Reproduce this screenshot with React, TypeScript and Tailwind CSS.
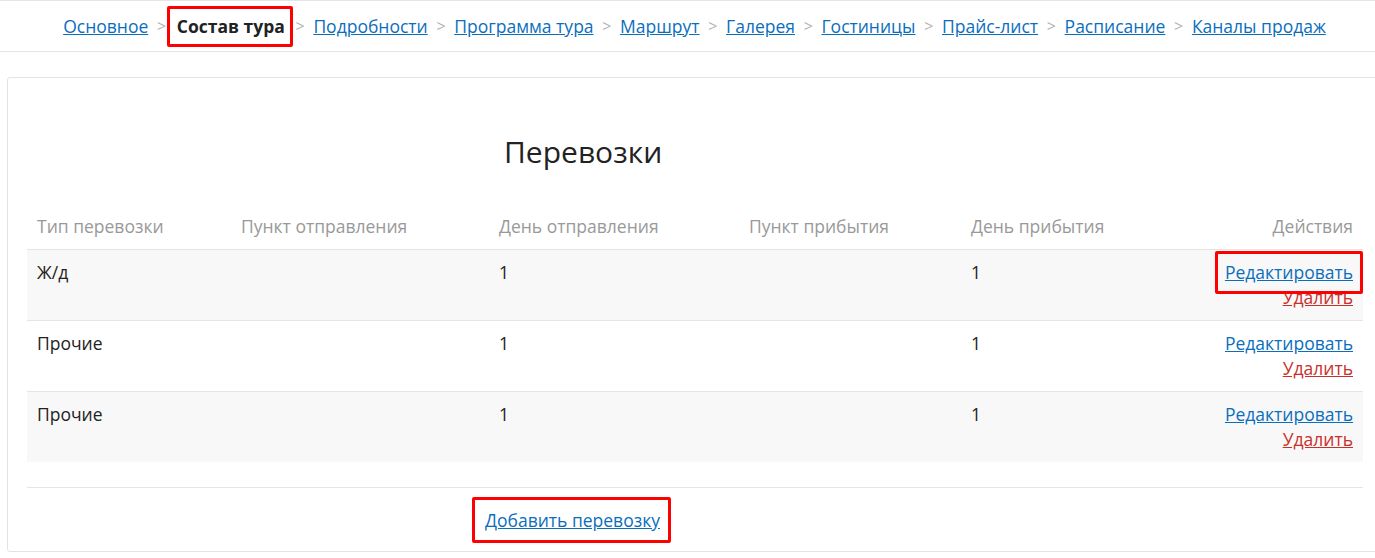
import React from "react";

const navItems = [
  "Основное",
  "Состав тура",
  "Подробности",
  "Программа тура",
  "Маршрут",
  "Галерея",
  "Гостиницы",
  "Прайс-лист",
  "Расписание",
  "Каналы продаж",
];

const rows = [
  { type: "Ж/д", dep: "1", arr: "1", highlight: true, bg: true },
  { type: "Прочие", dep: "1", arr: "1", highlight: false, bg: false },
  { type: "Прочие", dep: "1", arr: "1", highlight: false, bg: true },
];

export default function App() {
  return (
    <div
      className="w-[1375px] h-[558px] bg-white text-[#333] overflow-hidden"
      style={{ fontFamily: '"Open Sans", "Liberation Sans", sans-serif' }}
    >
      {/* Top nav */}
      <div className="h-[52px] border-t border-b border-[#e5e5e5] flex items-center justify-center text-[17.5px] leading-[26px] pl-[14px]">
        {navItems.map((item, i) => (
          <React.Fragment key={item}>
            {i > 0 && <span className="text-[#b3b3b3] mx-[8.7px] text-[16px]">&gt;</span>}
            {item === "Состав тура" ? (
              <span className="relative inline-block font-bold text-[#222] mx-[2px] leading-[26px]">
                {item}
                <span className="absolute left-[-10px] right-[-8px] top-[-7px] bottom-[-8px] border-[3px] border-[#ff0000] rounded-[2px]" />
              </span>
            ) : (
              <a href="#" className="text-[#0a6ebd] underline">
                {item}
              </a>
            )}
          </React.Fragment>
        ))}
      </div>

      {/* Card */}
      <div className="mt-[25px] ml-[7px] w-[1380px] h-[475px] border border-[#e3e3e3] rounded-[3px] pt-[54px] px-[19px]">
        <div className="pl-[477px] text-[30px] leading-[40px] text-[#222]">Перевозки</div>
        <table className="mt-[33px] w-[1336px] text-[17.5px] leading-[25px] border-collapse">
          <thead>
            <tr className="text-[#999]">
              <th className="font-normal text-left px-[10px] pt-[9px] pb-[10px] w-[204px]">Тип перевозки</th>
              <th className="font-normal text-left px-[10px] pt-[9px] pb-[10px] w-[258px]">Пункт отправления</th>
              <th className="font-normal text-left px-[10px] pt-[9px] pb-[10px] w-[250px]">День отправления</th>
              <th className="font-normal text-left px-[10px] pt-[9px] pb-[10px] w-[222px]">Пункт прибытия</th>
              <th className="font-normal text-left px-[10px] pt-[9px] pb-[10px]">День прибытия</th>
              <th className="font-normal text-right px-[10px] pt-[9px] pb-[10px]">Действия</th>
            </tr>
          </thead>
          <tbody>
            {rows.map((r, i) => (
              <tr key={i} className={`border-t border-[#e5e5e5] align-top ${r.bg ? "bg-[#f8f8f8]" : "bg-white"}`}>
                <td className="px-[10px] py-[10px] text-[#222]">{r.type}</td>
                <td className="px-[10px] py-[10px]"></td>
                <td className="px-[10px] py-[10px] text-[#222]">{r.dep}</td>
                <td className="px-[10px] py-[10px]"></td>
                <td className="px-[10px] py-[10px] text-[#222]">{r.arr}</td>
                <td className="px-[10px] py-[10px] text-right">
                  <div>
                    {r.highlight ? (
                      <span className="relative inline-block leading-[25px]">
                        <a href="#" className="text-[#0a6ebd] underline">Редактировать</a>
                        <span className="absolute left-[-10px] right-[-10px] top-[-9px] bottom-[-9px] border-[3px] border-[#ff0000] rounded-[2px]" />
                      </span>
                    ) : (
                      <a href="#" className="text-[#0a6ebd] underline">Редактировать</a>
                    )}
                  </div>
                  <div>
                    <a href="#" className="text-[#c9302c] underline">Удалить</a>
                  </div>
                </td>
              </tr>
            ))}
          </tbody>
        </table>
        <div className="mt-[25px] w-[1336px] border-t border-[#e5e5e5] pt-[20px] text-[17.5px] leading-[25px]">
          <span className="relative inline-block ml-[458px]">
            <a href="#" className="text-[#0a6ebd] underline">Добавить перевозку</a>
            <span className="absolute left-[-13px] right-[-11px] top-[-11px] bottom-[-10px] border-[3px] border-[#ff0000] rounded-[2px]" />
          </span>
        </div>
      </div>
    </div>
  );
}
